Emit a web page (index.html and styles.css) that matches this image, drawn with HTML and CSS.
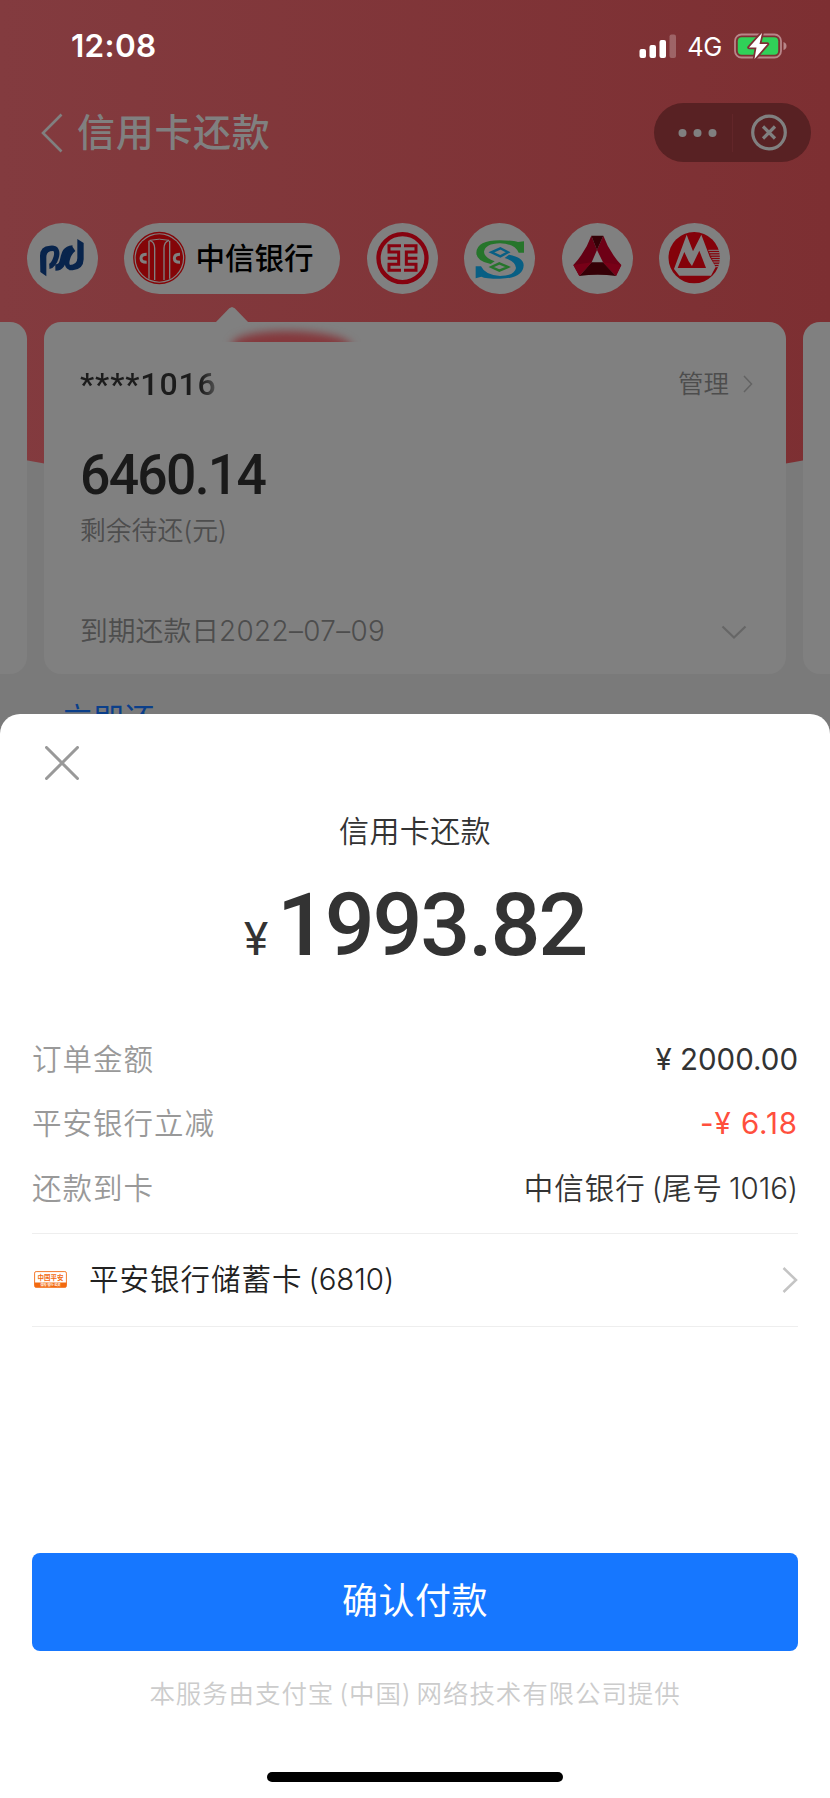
FILE: index.html
```html
<!DOCTYPE html>
<html lang="zh-CN">
<head>
  <meta charset="UTF-8" />
  <meta name="viewport" content="width=device-width, initial-scale=1.0"/>
  <title>信用卡还款</title>
  <link rel="stylesheet" href="styles.css">
</head>
<body>
  <div class="screen">
    <div class="hero-bg"></div>

    <div class="page">
      <div class="status-bar">
        <span class="time">12:08</span>
        <div class="status-right">
          <svg class="signal" width="38" height="25" viewBox="0 0 38 25">
            <rect x="0.5" y="15" width="6.5" height="9" rx="2" fill="#fff"/>
            <rect x="10.5" y="11" width="6.5" height="13" rx="2" fill="#fff"/>
            <rect x="20.5" y="6" width="6.5" height="18" rx="2" fill="#fff"/>
            <rect x="30.5" y="0.5" width="6.5" height="23.5" rx="2" fill="#fff" opacity=".25"/>
          </svg>
          <span class="network">4G</span>
          <svg class="battery" width="54" height="28" viewBox="0 0 54 28">
            <rect x="1" y="2.5" width="46" height="23" rx="6.5" fill="none" stroke="#b88689" stroke-width="1.8"/>
            <rect x="3.8" y="5.3" width="40.4" height="17.4" rx="4" fill="#30d158"/>
            <path d="M49.5 10 Q52.5 11 52.5 14 Q52.5 17 49.5 18Z" fill="#b88689"/>
            <path d="M28 1 L15 15.5 H22.5 L20.5 27 L33.5 12 H25.5Z" fill="#fff" stroke="#7d3034" stroke-width="3.5" stroke-linejoin="round" paint-order="stroke"/>
          </svg>
        </div>
      </div>

      <div class="nav">
        <svg class="back" width="22" height="40" viewBox="0 0 22 40">
          <path d="M20.5 1.5 L2 20 L20.5 38.5" fill="none" stroke="#808080" stroke-width="2.6"/>
        </svg>
        <h1>信用卡还款</h1>
        <div class="capsule">
          <svg width="157" height="59" viewBox="0 0 157 59">
            <circle cx="28.5" cy="30" r="4" fill="#808080"/>
            <circle cx="43.5" cy="30" r="4" fill="#808080"/>
            <circle cx="58.5" cy="30" r="4" fill="#808080"/>
            <path d="M78.5 11V49" stroke="#622629" stroke-width="1"/>
            <circle cx="115" cy="29.5" r="16.3" fill="none" stroke="#808080" stroke-width="3.2"/>
            <path d="M109 23.5L121 35.500M121 23.500L109 35.500" stroke="#808080" stroke-width="3.2"/>
          </svg>
        </div>
      </div>

      <div class="banks">
        <div class="bank">
          <svg width="71" height="71" viewBox="81 69 213 213">
            <path d="M120 168 Q120 138 150 137 H160 V153 Q139 152 139 172 V229 L121 216Z" fill="#08244c"/>
            <path d="M232 117 L251 129 V178 Q250 209 218 211 H208 V195 Q232 194 232 174Z" fill="#08244c"/>
            <g fill="none" stroke="#08244c" stroke-width="16">
              <path d="M152 145 H160 C182 148 164 198 148 199"/>
              <path d="M166 203 C204 202 176 148 218 145" stroke-width="19"/>
              <path d="M222 147 C206 158 190 200 212 203" stroke-width="14"/>
            </g>
          </svg>
        </div>
        <div class="bank active">
          <svg width="71" height="71" viewBox="372 69 213 213">
            <circle cx="478" cy="174" r="76.500" fill="none" stroke="#840508" stroke-width="4"/>
            <circle cx="478" cy="174" r="71" fill="#840508"/>
            <g fill="none" stroke="#808080" stroke-width="4">
              <path d="M449 121 Q464 126 464 145 V240"/>
              <path d="M507 121 Q492 126 492 145 V240"/>
              <path d="M447 122 V236M509 122 V236"/>
              <path d="M449 121 Q478 114 507 121" stroke-width="3"/>
            </g>
            <path d="M440 163 Q423 163 423 175 Q423 187 440 187" fill="none" stroke="#808080" stroke-width="9"/>
            <path d="M540 163 Q523 163 523 175 Q523 187 540 187" fill="none" stroke="#808080" stroke-width="9"/>
          </svg>
          <span>中信银行</span>
        </div>
        <div class="bank">
          <svg width="71" height="71" viewBox="21 24 213 213">
            <circle cx="127.500" cy="129.500" r="72" fill="none" stroke="#86020f" stroke-width="13"/>
            <g fill="none" stroke="#86020f" stroke-width="9">
              <path d="M123 92H87V111H116V130H83M116 130V148H87V166H123"/>
              <path d="M132 92H168V111H139V130H172M139 130V148H168V166H132"/>
            </g>
          </svg>
        </div>
        <div class="bank">
          <svg width="71" height="71" viewBox="148 69 213 213">
            <path d="M328 158 H312 Q300 131 256 130 Q212 131 208 155 Q208 172 240 184 L228 192 Q185 184 185 158 Q187 121 256 121 Q296 121 310 126 L328 124Z" fill="#26752b"/>
            <path d="M183 199 H199 Q212 226 256 228 Q300 227 304 204 Q303 184 270 174 L283 164 Q327 172 327 196 Q325 236 256 236 Q212 236 200 230 L183 235Z" fill="#085f84"/>
            <path d="M257 145 L280 157 L257 169 L230 157Z" fill="none" stroke="#085f84" stroke-width="7"/>
            <path d="M254 190 L280 201 L254 212 L230 201Z" fill="none" stroke="#26752b" stroke-width="7"/>
          </svg>
        </div>
        <div class="bank">
          <svg width="71" height="71" viewBox="438 69 213 213">
            <path d="M526 107 L543 150 L527 187 L490 228 L472 195 Q508 157 526 107Z" fill="#640014"/>
            <path d="M562 107 L543 150 L561 187 L600 228 L616 195 Q580 157 562 107Z" fill="#6e0016"/>
            <path d="M526 107 H562 L543 150Z" fill="#350006"/>
            <path d="M527 187 H561 L600 228 Q545 220 490 228Z" fill="#350006"/>
            <path d="M472 195 L527 187 L490 228Z" fill="#780017"/>
            <path d="M616 195 L561 187 L600 228Z" fill="#780017"/>
          </svg>
        </div>
        <div class="bank">
          <svg width="71" height="71" viewBox="732 69 213 213">
            <circle cx="837.500" cy="173" r="77" fill="#84020a"/>
            <path d="M815 104 L834 154 L859 104 L884 170 L902 201 L888 227 H793 L777 207Z" fill="#808080"/>
            <path d="M788 204 L808 156 L821 184 L835 204Z" fill="#84020a"/>
            <path d="M828 204 L853 152 L873 204Z" fill="#84020a"/>
            <path d="M880 151H912M883 158H914M886 165H915M889 172H915M892 179H915M895 186H914M898 193H912M901 200H910" stroke="#808080" stroke-width="3"/>
          </svg>
        </div>
      </div>

      <div class="cards">
        <div class="card"></div>
        <div class="card current">
          <div class="smudge"></div>
          <div class="card-head">
            <span class="card-no">****1016</span>
            <span class="manage">管理
              <svg width="10" height="18" viewBox="0 0 10 18">
                <path d="M1 1 L8.500 9 L1 17" fill="none" stroke="#636363" stroke-width="1.500"/>
              </svg>
            </span>
          </div>
          <div class="balance">6460.14</div>
          <div class="balance-label">剩余待还(元)</div>
          <div class="due">
            <span>到期还款日<b>2022–07–09</b></span>
            <svg width="26" height="15" viewBox="0 0 26 15">
              <path d="M1.500 1.500 L13 12.500 L24.500 1.500" fill="none" stroke="#666" stroke-width="2.200"/>
            </svg>
          </div>
        </div>
        <div class="card"></div>
      </div>

      <div class="pay-now">立即还</div>
    </div>

    <div class="sheet">
      <svg class="close" width="34" height="34" viewBox="0 0 34 34">
        <path d="M1.500 1.500 L32.500 32.500 M32.500 1.500 L1.500 32.500" stroke="#999" stroke-width="3" stroke-linecap="round"/>
      </svg>
      <div class="sheet-title">信用卡还款</div>
      <div class="amount"><small>¥</small>1993.82</div>

      <div class="rows">
        <div class="row"><span class="label">订单金额</span><span class="value">¥ 2000.00</span></div>
        <div class="row"><span class="label">平安银行立减</span><span class="value discount">-¥ 6.18</span></div>
        <div class="row"><span class="label">还款到卡</span><span class="value to-card">中信银行<i>(</i>尾号<i>1016)</i></span></div>
      </div>

      <div class="pay-method">
        <svg width="33" height="17" viewBox="0 0 33 17">
          <rect x="0.600" y="0.600" width="31.800" height="15.600" rx="1.500" fill="#fff" stroke="#f47a2c" stroke-width="1"/>
          <path d="M0.500 11.500 H32.500 V15 Q32.500 16.500 31 16.500 H2 Q0.500 16.500 0.500 15Z" fill="#f26a10"/>
          <text class="logo-name" x="16.500" y="8.600">中国平安</text>
          <text class="logo-sub" x="16.500" y="15.200">保险·银行·投资</text>
        </svg>
        <span class="method-name">平安银行储蓄卡<i>(6810)</i></span>
        <svg class="arrow" width="16" height="28" viewBox="0 0 16 28">
          <path d="M1.500 2 L14 14 L1.500 26" fill="none" stroke="#c4c4c4" stroke-width="2.500"/>
        </svg>
      </div>

      <button class="confirm">确认付款</button>
      <div class="provider">本服务由支付宝<i class="open">(</i>中国<i class="close-paren">)</i>网络技术有限公司提供</div>
      <div class="home-indicator"></div>
    </div>
  </div>
</body>
</html>
```
FILE: styles.css
```css
* {
  box-sizing: border-box;
}
body {
  margin: 0;
  font-family: Inter, "Noto Sans CJK SC", sans-serif;
  line-height: 1.2;
}
svg {
  display: block;
  flex-shrink: 0;
}
i {
  font-style: normal;
}
.screen {
  position: relative;
  width: 830px;
  height: 1798px;
  background: #7a7a7a;
  overflow: hidden;
}
/* curved red area behind the cards */
.hero-bg {
  position: absolute;
  top: 0;
  left: 0;
  width: 830px;
  height: 500px;
  background: linear-gradient(90deg, #833b3f, #7d2f32);
  clip-path: circle(2200px at 415px -1705px);
}
.page {
  position: relative;
}

/* status bar */
.status-bar {
  display: flex;
  justify-content: space-between;
  align-items: center;
  height: 92px;
  padding: 0 42px 0 71px;
  color: #fff;
}
.time {
  margin-top: -1px;
  font-size: 31.5px;
  font-weight: 600;
  letter-spacing: 0.3px;
}
.status-right {
  display: flex;
  align-items: center;
}
.network {
  margin: 2px 12px 0 10px;
  font-size: 25.5px;
  letter-spacing: -0.4px;
}

/* title */
.nav {
  display: flex;
  align-items: center;
  height: 81px;
  padding: 0 19px 0 41px;
}
.nav h1 {
  flex: 1;
  margin: 0 0 0 14px;
  color: #808080;
  font-size: 38px;
  font-weight: 500;
  letter-spacing: 0.7px;
}
.capsule {
  width: 157px;
  height: 59px;
  border-radius: 30px;
  background: #582123;
}

/* bank list */
.banks {
  display: flex;
  gap: 26.4px;
  padding: 50px 0 0 27px;
}
.bank {
  display: flex;
  align-items: center;
  width: 71px;
  height: 71px;
  border-radius: 36px;
  background: #808080;
}
.bank.active {
  width: 216px;
  font-size: 29.5px;
  font-weight: 500;
}

/* cards */
.cards {
  display: flex;
  justify-content: center;
  gap: 17px;
  width: 830px;
  padding-top: 28px;
  overflow: hidden;
}
.card {
  position: relative;
  flex: 0 0 742px;
  height: 352px;
  border-radius: 17px;
  background: #808080;
}
.current {
  padding: 37px 37px 0 36px;
}
.current::before {
  content: "";
  position: absolute;
  top: -15px;
  left: 171px;
  width: 34px;
  height: 16px;
  background: #808080;
  clip-path: polygon(0 100%, 42% 8%, 50% 0, 58% 8%, 100% 100%);
}
.smudge {
  position: absolute;
  top: 1px;
  left: 174px;
  width: 150px;
  height: 19px;
  overflow: hidden;
}
.smudge::before {
  content: "";
  position: absolute;
  top: 8px;
  left: 14px;
  width: 120px;
  height: 30px;
  border-radius: 45% 55% 0 0;
  background: #84383c;
  filter: blur(4px);
}
.card-head {
  display: flex;
  justify-content: space-between;
  align-items: center;
  height: 50px;
}
.card-no {
  font-family: Roboto, sans-serif;
  font-size: 32px;
  font-weight: 500;
  letter-spacing: 0.9px;
  background: linear-gradient(90deg, #1c1c1c 88%, #555 100%);
  background-clip: text;
  color: transparent;
}
.manage {
  display: flex;
  align-items: center;
  gap: 14px;
  margin-right: -4px;
  color: #4d4d4d;
  font-size: 25.5px;
  font-weight: 350;
}
.balance {
  margin-top: 30px;
  height: 72px;
  line-height: 72px;
  color: #1a1a1a;
  font-family: Roboto, sans-serif;
  font-size: 56px;
  font-weight: 500;
  letter-spacing: -1.8px;
  transform: scaleX(0.955);
  transform-origin: left;
}
.balance-label {
  height: 40px;
  line-height: 40px;
  color: #4d4d4d;
  font-size: 25.8px;
  font-weight: 350;
}
.due {
  display: flex;
  justify-content: space-between;
  align-items: center;
  margin-top: 61px;
  height: 40px;
  padding-right: 2px;
  color: #4d4d4d;
  font-size: 27.8px;
  font-weight: 350;
}
.due b {
  font-weight: 300;
  letter-spacing: 0.4px;
}
.pay-now {
  padding: 25px 0 0 62px;
  color: #0b3f8a;
  font-size: 31px;
  line-height: 40px;
}

/* payment sheet */
.sheet {
  position: absolute;
  left: 0;
  right: 0;
  bottom: 0;
  height: 1084px;
  padding: 32px 32px 0;
  border-radius: 20px 20px 0 0;
  background: #fff;
}
.close {
  margin-left: 13px;
}
.sheet-title {
  margin-top: 31px;
  line-height: 40px;
  text-align: center;
  color: #333;
  font-size: 30px;
  font-weight: 350;
  letter-spacing: 0.4px;
}
.amount {
  margin-top: 22px;
  height: 104px;
  line-height: 104px;
  text-align: center;
  color: #333;
  font-family: Roboto, sans-serif;
  font-size: 88px;
  font-weight: 500;
  letter-spacing: -2.2px;
}
.amount small {
  margin-right: 11px;
  font-size: 46px;
  font-weight: 400;
}
.rows {
  margin-top: 50px;
  padding-bottom: 13px;
  border-bottom: 1px solid #eee;
}
.row {
  display: flex;
  justify-content: space-between;
  height: 64.3px;
  font-size: 29.5px;
  line-height: 64.3px;
}
.label {
  color: #999;
  font-weight: 350;
  letter-spacing: 1px;
}
.value {
  color: #333;
}
.discount {
  color: #ff4f3d;
  letter-spacing: 0.9px;
}
.to-card,
.method-name {
  font-weight: 350;
  letter-spacing: 1px;
}
.to-card i,
.method-name i {
  margin-left: 6px;
  font-weight: 350;
  letter-spacing: -0.1px;
}
.pay-method {
  display: flex;
  align-items: center;
  height: 93px;
  padding-left: 2px;
  border-bottom: 1px solid #eee;
  font-size: 29.5px;
}
.logo-name,
.logo-sub {
  fill: #f26a10;
  font-size: 6.5px;
  font-weight: 700;
  text-anchor: middle;
}
.logo-sub {
  fill: #fff;
  font-size: 3px;
}
.method-name {
  flex: 1;
  margin-left: 22px;
  color: #222;
}
.confirm {
  display: block;
  width: 100%;
  height: 98px;
  margin-top: 226px;
  border: none;
  border-radius: 8px;
  background: #1677ff;
  color: #fff;
  font-family: inherit;
  font-size: 36px;
  line-height: 1.2;
  letter-spacing: 0.5px;
}
.provider {
  margin-top: 23px;
  line-height: 40px;
  text-align: center;
  color: #ccc;
  font-size: 25.5px;
  font-weight: 350;
  letter-spacing: 0.9px;
}
.provider .open {
  margin-left: 5px;
}
.provider .close-paren {
  margin-right: 5px;
}
.home-indicator {
  width: 296px;
  height: 10px;
  margin: 58px auto 0;
  border-radius: 5px;
  background: #000;
}
```
